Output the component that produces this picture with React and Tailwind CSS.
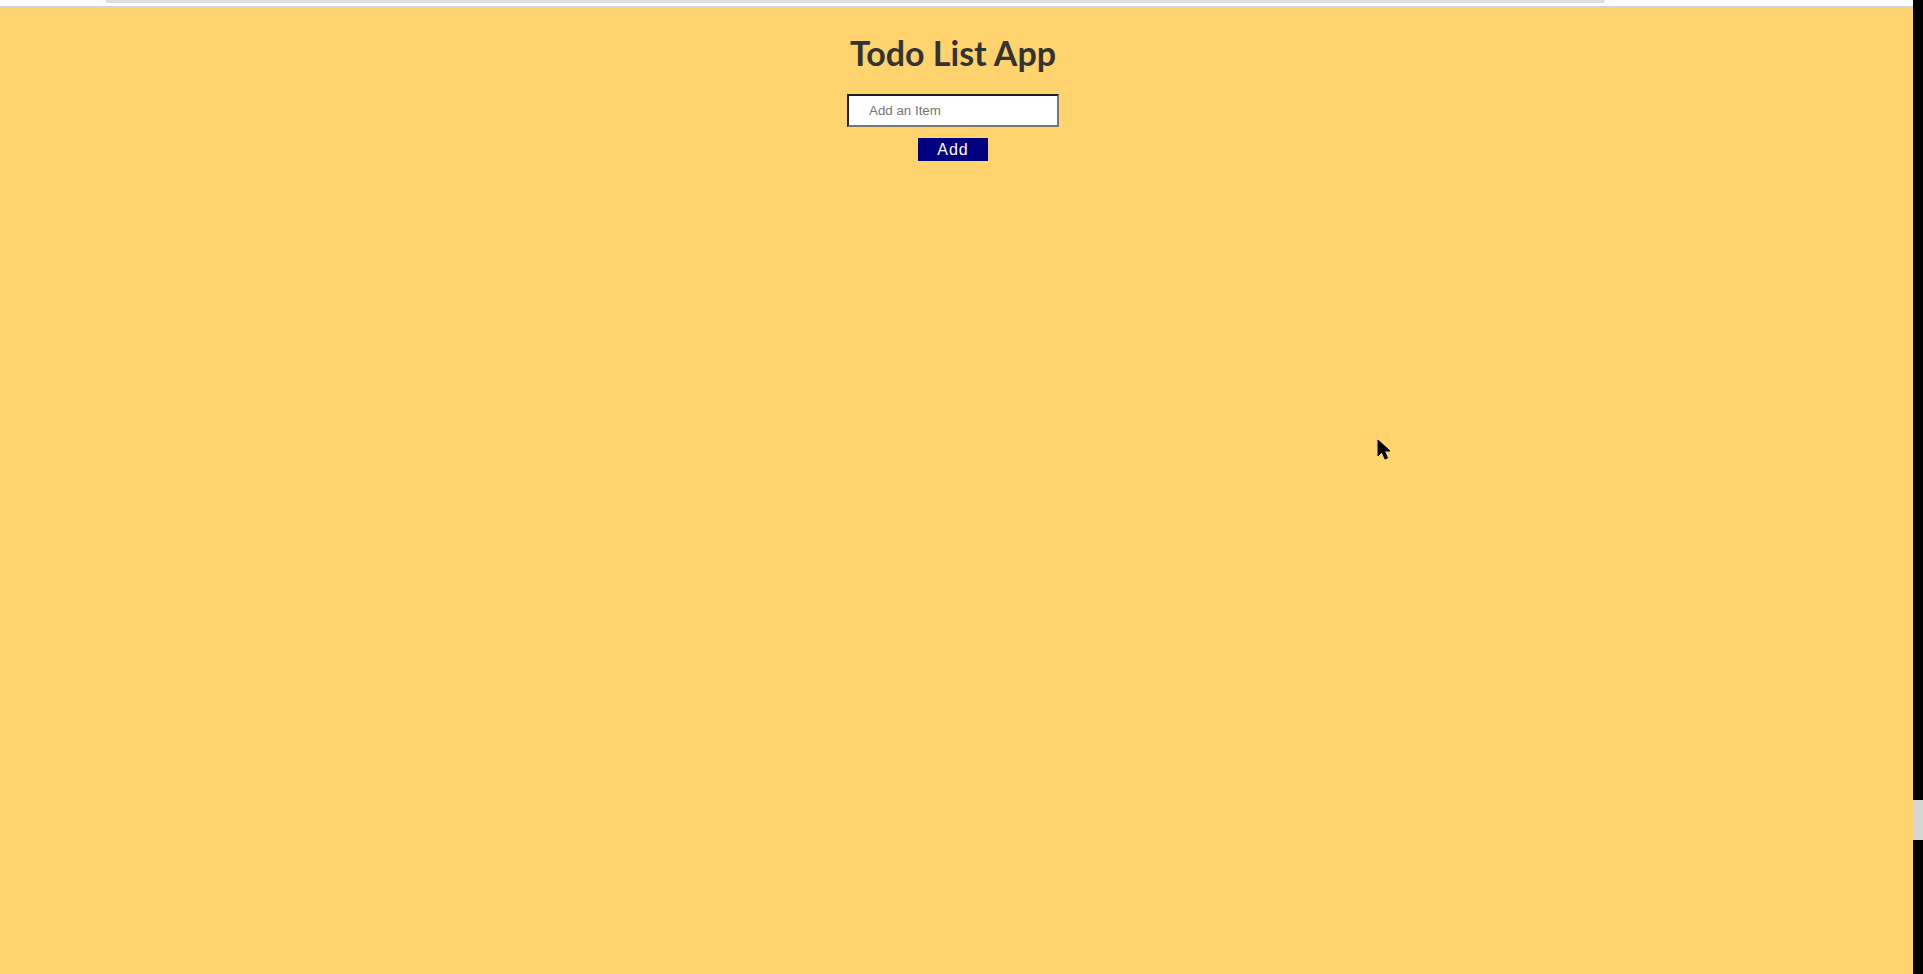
export default function App() {
  return (
    <div className="relative flex h-[974px] w-[1923px] overflow-hidden bg-[#ffd36d]">
      <div className="flex flex-1 flex-col">
        <div className="relative h-[7px] shrink-0 border-b border-[#cfd3d6] bg-white">
          <div className="ml-[105px] h-[3px] w-[1500px] rounded-b-[3px] bg-[#dedede]"></div>
        </div>
        <div className="flex flex-1 flex-col items-center pr-[7px]">
          <h1 className="mt-[25px] text-[34px] font-bold leading-[42px] text-[#333333] [font-family:Lato,sans-serif]">
            Todo List App
          </h1>
          <input
            type="text"
            placeholder="Add an Item"
            className="mt-[20px] h-[33px] w-[212px] border-2 border-t-[#1f1f1f] border-l-[#1f1f1f] border-b-[#767676] border-r-[#767676] bg-white pl-[20px] text-[13.33px] text-black outline-none placeholder:text-[#757575] [font-family:'Liberation_Sans',Arial,sans-serif]"
          />
          <button className="mt-[11px] h-[23px] w-[70px] bg-[#000080] text-[16px] leading-[23px] tracking-[1px] text-white [font-family:'Liberation_Sans',Arial,sans-serif]">
            Add
          </button>
        </div>
      </div>
      <div className="relative w-[10px] shrink-0 bg-black">
        <div className="mt-[800px] h-[40px] w-[10px] bg-[#d4d4d4]"></div>
      </div>
      <svg className="absolute left-[1377px] top-[439px]" width="14" height="22" viewBox="0 0 14 22">
        <path d="M1 1 L1 17 L5 13 L8 20 L10.5 19 L7.5 12 L13 12 Z" fill="black" stroke="black" strokeWidth="1" />
      </svg>
    </div>
  );
}
